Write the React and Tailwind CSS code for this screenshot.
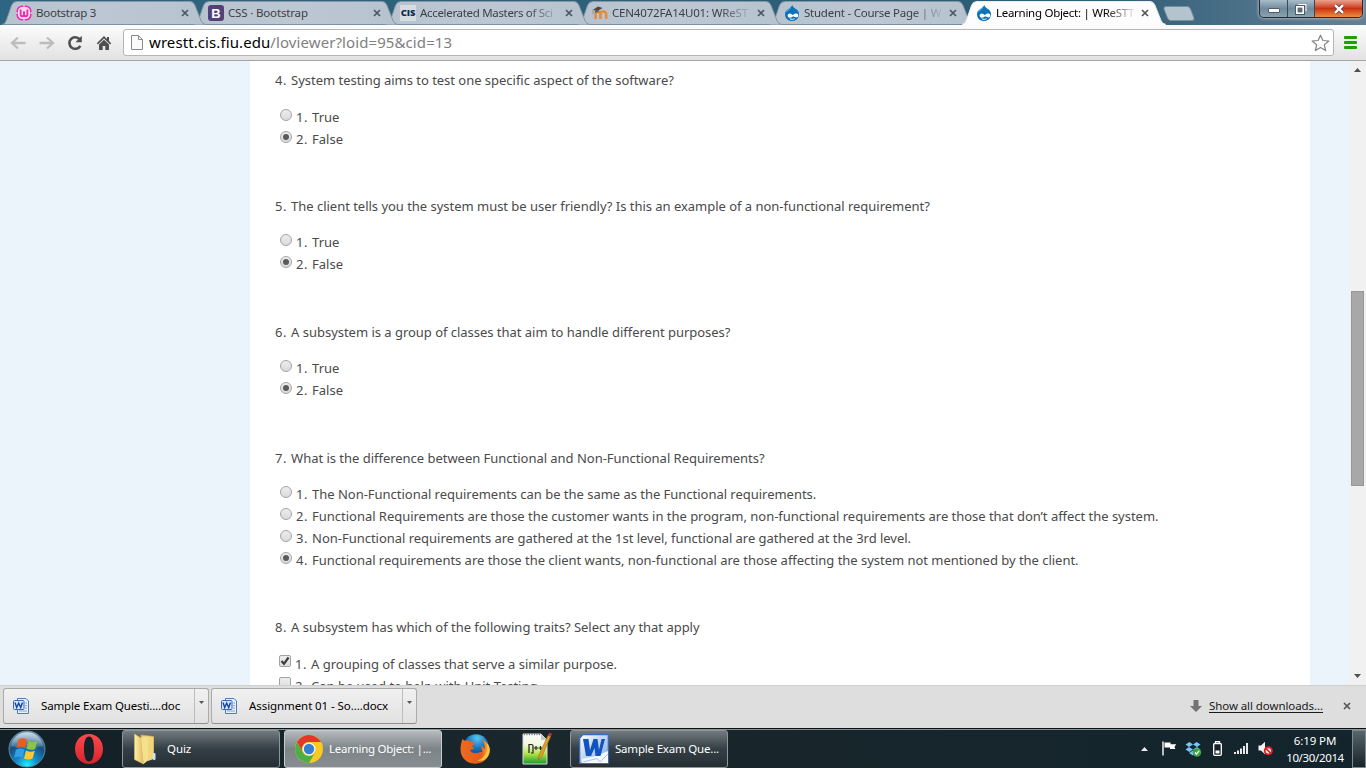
import { clsx } from "clsx";

const QUESTIONS = [
  {
    text: "4. System testing aims to test one specific aspect of the software?",
    options: ["1. True", "2. False"],
    picked: 1,
  },
  {
    text: "5. The client tells you the system must be user friendly? Is this an example of a non-functional requirement?",
    options: ["1. True", "2. False"],
    picked: 1,
  },
  {
    text: "6. A subsystem is a group of classes that aim to handle different purposes?",
    options: ["1. True", "2. False"],
    picked: 1,
  },
  {
    text: "7. What is the difference between Functional and Non-Functional Requirements?",
    options: [
      "1. The Non-Functional requirements can be the same as the Functional requirements.",
      "2. Functional Requirements are those the customer wants in the program, non-functional requirements are those that don’t affect the system.",
      "3. Non-Functional requirements are gathered at the 1st level, functional are gathered at the 3rd level.",
      "4. Functional requirements are those the client wants, non-functional are those affecting the system not mentioned by the client.",
    ],
    picked: 3,
  },
  {
    text: "8. A subsystem has which of the following traits? Select any that apply",
    options: ["1. A grouping of classes that serve a similar purpose.", "2. Can be used to help with Unit Testing."],
    picked: 0,
    multiple: true,
  },
];

function Cross({ className }) {
  return (
    <svg viewBox="0 0 8 8" className={clsx("h-2 w-2 shrink-0", className)}>
      <path d="M1 1L7 7M7 1L1 7" stroke="currentColor" strokeWidth="1.7" fill="none" />
    </svg>
  );
}

/* ---------- tab icons ---------- */

function WampIcon() {
  return (
    <svg viewBox="0 0 16 16" className="h-4 w-4 shrink-0">
      <rect x="1.2" y="1.2" width="13.6" height="13.6" rx="5" fill="#f6dcee" stroke="#f22bb0" strokeWidth="1.6" />
      <path d="M0 8h2M14 8h2M8 0v2M8 14v2" stroke="#c9ccd8" strokeWidth="1.4" />
      <path d="M4.6 4.6v5q0 1.6 1.6 1.6T8 9.6V6.2v3.4q0 1.6 1.7 1.6t1.7-1.6v-5" fill="none" stroke="#f22bb0" strokeWidth="1.9" />
    </svg>
  );
}

function BootstrapIcon() {
  return (
    <span className="flex h-4 w-4 shrink-0 items-center justify-center rounded-[3px] bg-[#53407b] font-['Liberation_Sans'] text-[13px] leading-none font-bold text-white">
      B
    </span>
  );
}

function CisIcon() {
  return (
    <span className="flex h-4 w-4 shrink-0 items-center justify-center bg-[#d5dde2] font-['Open_Sans'] text-[9.5px] leading-none font-extrabold tracking-[-0.2px] text-[#0c2b50]">
      CIS
    </span>
  );
}

function MoodleIcon() {
  return (
    <svg viewBox="0 0 16 16" className="h-4 w-4 shrink-0">
      <path d="M3.6 14V8.6q0-2 1.9-2t2.9 2V14M8.400 14V8.600q0-2 2.600-2t3.200 2V14" fill="none" stroke="#ea8a35" strokeWidth="2.500" />
      <path d="M0.8 5L6 1.600l4.500 1.500-4.800 2.900z" fill="#4b4744" />
      <path d="M3 5.500v2.300l3.600-.6V5z" fill="#66605a" />
      <path d="M1 5.200v4.200" stroke="#85817c" strokeWidth=".7" />
    </svg>
  );
}

function DrupalIcon() {
  return (
    <svg viewBox="0 0 16 16" className="h-4 w-4 shrink-0">
      <path d="M8.2 0C8.8 2 10.2 2.9 12 4c1.800 1.200 3 3 3 5.200C15 13.200 11.800 16 8 16s-7-2.800-7-6.800C1 6.600 2.500 5 4.300 3.900 6.100 2.900 7.600 2 8.200 0z" fill="#0b73ba" />
      <path d="M2.600 5.600C4.200 3.900 6 4 7.400 2.300 7 4.400 3.900 5.200 2.200 7.400z" fill="#5db2e4" />
      <path d="M8.700 10.100c1.400-1.300 2.300-1.700 3.500-1.700 1.500 0 2.300 1.200 2.100 2.600-.3 1.500-2.100 1.800-3.300 1-1-.7-1.700-.8-2.600-.2-1.300.9-3.300 1.300-4.300.2-1.100-1.300-.2-3.200 1.500-3.400 1.300-.1 2.100.8 3.100 1.500z" fill="#fff" />
      <path d="M5.800 13.700c1.500.9 3.400.9 4.800 0" fill="none" stroke="#fff" strokeWidth="1" />
    </svg>
  );
}

/* ---------- tab strip ---------- */

function Tab({ icon, title, tracking, active, className }) {
  return (
    <div className={clsx("relative -mr-[12px] h-6 w-[204px] shrink-0", className)}>
      <svg viewBox="0 0 204 24" className="absolute inset-0 h-6 w-[204px]">
        <defs>
          <linearGradient id="tabIdle" x1="0" x2="1" y1="0" y2="0">
            <stop offset="0" stopColor="#b6c3ce" />
            <stop offset=".5" stopColor="#bdc7d3" />
            <stop offset="1" stopColor="#b6c3ce" />
          </linearGradient>
        </defs>
        <path
          d="M0 23.500Q3 23.500 4.500 19L9.500 4.500Q11 .5 15 .5H188Q191.500 .5 193 4.500L199 19.500Q200.500 23.500 204 23.500"
          fill={active ? "#fdfdfd" : "url(#tabIdle)"}
          stroke={active ? "#e8eef2" : "#8797a3"}
        />
        {active && <path d="M1 23.500H203" stroke="#fcfcfc" strokeWidth="1.500" />}
      </svg>
      <div className="relative flex h-6 items-center pl-[14px]">
        {icon}
        <span
          className={clsx(
            "ml-1 w-[139px] text-[11.5px] whitespace-nowrap",
            title.length > 20 && "[mask-image:linear-gradient(to_right,black_108px,transparent_141px)]",
            tracking,
            active ? "text-black" : "text-[#3c4044]",
          )}
        >
          {title}
        </span>
        <Cross className={clsx("ml-[6px]", active ? "text-[#555]" : "text-[#4d5660]")} />
      </div>
    </div>
  );
}

function WindowButtons() {
  return (
    <div className="ml-auto flex h-[18px] w-[104px] shrink-0 self-start overflow-hidden rounded-b-[5px] border border-t-0 border-[#1d2f3d] shadow-[0_0_3px_1px_rgba(255,210,190,0.55)]">
      <div className="flex w-[28px] items-end justify-center border-r border-[#344b5a] bg-linear-to-b from-[#a9bdc9] via-[#708b9c] via-50% to-[#8aa2af] pb-1">
        <span className="h-[5px] w-[12px] rounded-[1px] border border-[#515b66] bg-white" />
      </div>
      <div className="flex w-[27px] items-center justify-center border-r border-[#344b5a] bg-linear-to-b from-[#a9bdc9] via-[#708b9c] via-50% to-[#8aa2af]">
        <svg viewBox="0 0 12 12" className="h-3 w-3">
          <path d="M4 2h6.500v6.500" fill="none" stroke="#4d5965" strokeWidth="3.200" />
          <path d="M3.500 1.500h7.500v7" fill="none" stroke="#fff" strokeWidth="1.300" />
          <rect x="1.500" y="3.500" width="7" height="7" fill="#566b7b" stroke="#4d5965" strokeWidth="3" />
          <rect x="1.800" y="3.800" width="6.400" height="6.400" fill="#566b7b" stroke="#fff" strokeWidth="1.600" />
        </svg>
      </div>
      <div className="flex flex-1 items-center justify-center bg-linear-to-b from-[#e9a18c] via-[#c93112] via-50% to-[#ef8a3d]">
        <svg viewBox="0 0 12 10" className="h-[10px] w-3">
          <path d="M2 1.200l8 7.600M10 1.200L2 8.800" stroke="#58414a" strokeWidth="4" />
          <path d="M2 1.200l8 7.600M10 1.200L2 8.800" stroke="#fff" strokeWidth="2.400" />
        </svg>
      </div>
    </div>
  );
}

function TitleBar() {
  return (
    <div className="flex h-[25px] items-end bg-linear-to-r from-[#2e6580] via-[#2d5c74] via-80% to-[#628199] pl-[2px]">
      <Tab icon={<WampIcon />} title="Bootstrap 3" tracking="tracking-[-0.25px]" className="z-[5]" />
      <Tab icon={<BootstrapIcon />} title="CSS · Bootstrap" tracking="tracking-[-0.16px]" className="z-[4]" />
      <Tab icon={<CisIcon />} title="Accelerated Masters of Sci" tracking="tracking-[-0.32px]" className="z-[3]" />
      <Tab icon={<MoodleIcon />} title="CEN4072FA14U01: WReST" tracking="tracking-[-0.18px]" className="z-[2]" />
      <Tab icon={<DrupalIcon />} title="Student - Course Page | W" tracking="tracking-[-0.24px]" className="z-[1]" />
      <Tab icon={<DrupalIcon />} title="Learning Object: | WReSTT" tracking="tracking-[-0.28px]" active className="z-[6]" />
      <svg viewBox="0 0 32 15" className="mb-1 ml-[9px] h-[15px] w-8 shrink-0">
        <path d="M3 .5H24Q26.500.500 27.500 3L31 12Q31.500 14.500 29 14.500H8Q5.500 14.500 4.500 12L1 3Q.5.500 3 .500z" fill="#b4c4cf" stroke="#77909e" />
      </svg>
      <WindowButtons />
      <div className="w-[3px] shrink-0" />
    </div>
  );
}

/* ---------- toolbar ---------- */

function Toolbar() {
  return (
    <div className="flex h-9 items-center border-b border-[#a5a5a5] bg-linear-to-b from-[#fcfcfc] to-[#e2e2e2]">
      <svg viewBox="0 0 16 14" className="ml-[10px] h-[14px] w-4">
        <path d="M8 1.500L2 7l6 5.500M2 7h13.500" fill="none" stroke="#bdbdbd" strokeWidth="2.300" />
      </svg>
      <svg viewBox="0 0 16 14" className="ml-[13px] h-[14px] w-4">
        <path d="M8 1.500L14 7l-6 5.500M14 7H.5" fill="none" stroke="#bdbdbd" strokeWidth="2.300" />
      </svg>
      <svg viewBox="0 0 16 16" className="ml-3 h-4 w-4">
        <path d="M12.600 4.200A5.800 5.800 0 1 0 13.300 10.800" fill="none" stroke="#4f4f4f" strokeWidth="2.600" />
        <path d="M14.800.8v6.400H8.400z" fill="#4f4f4f" />
      </svg>
      <svg viewBox="0 0 16 16" className="ml-[13px] h-4 w-4">
        <path d="M8 1L.8 8.300l1.100 1.100L8 3.600l6.100 5.800 1.100-1.100-2.200-2.200V2h-2v2z" fill="#4f4f4f" />
        <path d="M8 4.800l-5 4.700V15h3.700v-4h2.600v4H13V9.500z" fill="#4f4f4f" />
      </svg>
      <div className="ml-[11px] flex h-[27px] w-[1211px] items-center rounded-[3px] border border-[#b5b5b5] bg-white pr-[3px] pl-[7px]">
        <svg viewBox="0 0 12 15" className="h-[15px] w-3">
          <path d="M.5.5H7.500L11.500 4.500V14.500H.5z" fill="#fafafa" stroke="#8a8a8a" />
          <path d="M7.500.5V4.500H11.500" fill="none" stroke="#8a8a8a" />
        </svg>
        <span className="ml-[6px] text-[15px] tracking-[0.09px] text-[#808080]">
          <span className="text-black">wrestt.cis.fiu.edu</span>/loviewer?loid=95&amp;cid=13
        </span>
        <svg viewBox="0 0 19 18" className="ml-auto h-[18px] w-[19px]">
          <path
            d="M9.500 1.300l2.400 5.200 5.900.5-4.500 3.900 1.400 5.700-5.200-3-5.200 3 1.400-5.700L1.200 7l5.900-.5z"
            fill="#fff"
            stroke="#808080"
            strokeWidth="1.200"
            strokeLinejoin="round"
          />
        </svg>
      </div>
      <div className="ml-[10px] flex w-[13px] flex-col gap-[2px]">
        <span className="h-[3px] rounded-[1px] bg-[#1ea000]" />
        <span className="h-[3px] rounded-[1px] bg-[#1ea000]" />
        <span className="h-[3px] rounded-[1px] bg-[#1ea000]" />
      </div>
    </div>
  );
}

/* ---------- quiz ---------- */

function Mark({ multiple, on }) {
  if (multiple) {
    return (
      <span className="-mt-[4.300px] mr-[4px] ml-[4px] flex h-3 w-3 shrink-0 items-center justify-center rounded-[2px] border border-[#a2a2a2] bg-linear-to-b from-[#eee] to-[#dcdcdc]">
        {on && (
          <svg viewBox="0 0 10 10" className="h-[10px] w-[10px] shrink-0">
            <path d="M1.500 5L4 7.800 8.500 1.500" fill="none" stroke="#3c3c3c" strokeWidth="2.200" />
          </svg>
        )}
      </span>
    );
  }
  return (
    <span className="-mt-[4.3px] mr-1 ml-[5px] flex h-3 w-3 shrink-0 items-center justify-center rounded-full border border-[#a4a4a4] bg-linear-to-b from-[#ededed] to-[#dadada]">
      {on && <span className="h-[6px] w-[6px] rounded-full bg-[#5a5a5a]" />}
    </span>
  );
}

function Numbered({ text }) {
  return (
    <>
      <span className="tracking-[0.6px]">{text.slice(0, 3)}</span>
      {text.slice(3)}
    </>
  );
}

function Question({ text, options, picked, multiple }) {
  return (
    <section className="mb-[45.45px]">
      <p className="leading-[22px]">
        <Numbered text={text} />
      </p>
      <div className="mt-[14.3px]">
        {options.map((option, i) => (
          <div key={option} className="flex h-[22px] items-center leading-[22px]">
            <Mark multiple={multiple} on={i === picked} />
            <span>
              <Numbered text={option} />
            </span>
          </div>
        ))}
      </div>
    </section>
  );
}

function Page() {
  return (
    <div className="flex h-[624px] overflow-hidden bg-[#ebf3fb]">
      <main className="ml-[250px] w-[1060px] bg-white pt-[8.4px] pl-[25px] text-[13px] tracking-[-0.025px] whitespace-nowrap text-[#4a4a4a]">
        {QUESTIONS.map((q) => (
          <Question key={q.text} {...q} />
        ))}
      </main>
      <div className="ml-auto flex h-full w-[17px] flex-col items-center bg-[#f1f1f1]">
        <svg viewBox="0 0 7 4" className="mt-[7px] h-1 w-[7px] shrink-0">
          <path d="M0 4L3.500 0 7 4z" fill="#505050" />
        </svg>
        <div className="mt-[219px] h-[195px] w-[13px] shrink-0 border border-[#979797] bg-[#a8a8a8]" />
        <svg viewBox="0 0 7 4" className="mt-auto mb-[7px] h-1 w-[7px] shrink-0">
          <path d="M0 0L3.500 4 7 0z" fill="#505050" />
        </svg>
      </div>
    </div>
  );
}

/* ---------- download shelf ---------- */

function DocIcon() {
  return (
    <svg viewBox="0 0 16 16" className="h-4 w-4 shrink-0">
      <path d="M4.500.5h8.500l2.500 2.500v12.500h-11z" fill="#e9f0fb" stroke="#5877b4" />
      <path d="M12 5h2M12 7.500h2M12 10h2M6 13h8" stroke="#87a3d6" />
      <rect x=".5" y="2.500" width="10.500" height="9" rx="1" fill="#dce8fa" stroke="#3e66b3" />
      <path d="M2 4.500l1.700 5 2-4.500 2 4.500 1.800-5" fill="none" stroke="#1a4ba5" strokeWidth="1.500" />
    </svg>
  );
}

function Download({ name, width, tracking }) {
  return (
    <div className={clsx("flex h-9 rounded-[3px] border border-[#aaa] border-b-[#8f8f8f] bg-linear-to-b from-[#f1f1f1] to-[#e1e1e1]", width)}>
      <div className="flex flex-1 items-center border-r border-[#bcbcbc] pl-[9px]">
        <DocIcon />
        <span className={clsx("ml-3 text-[11.5px] whitespace-nowrap text-black", tracking)}>{name}</span>
      </div>
      <div className="flex w-[13px] justify-center pt-3">
        <svg viewBox="0 0 5 3" className="h-[3px] w-[5px]">
          <path d="M0 0h5L2.500 3z" fill="#555" />
        </svg>
      </div>
    </div>
  );
}

function DownloadShelf() {
  return (
    <div className="flex h-[43px] items-start gap-[2px] border-t border-[#cfcfcf] bg-[#dedede] pt-[2px] pl-[3px]">
      <Download name="Sample Exam Questi....doc" width="w-[206px]" tracking="tracking-[-0.15px]" />
      <Download name="Assignment 01 - So....docx" width="w-[206px]" tracking="tracking-[-0.08px]" />
      <div className="mr-[15px] ml-auto flex h-9 items-center">
        <svg viewBox="0 0 12 12" className="h-3 w-3">
          <path d="M3.500 0h5v6H12L6 12 0 6h3.500z" fill="#737373" />
        </svg>
        <span className="ml-[7px] text-[11.5px] tracking-[-0.08px] text-[#1a1a1a] underline underline-offset-2">Show all downloads...</span>
        <Cross className="ml-5 text-[#555]" />
      </div>
    </div>
  );
}

/* ---------- taskbar ---------- */

function StartOrb() {
  return (
    <svg viewBox="0 0 38 38" className="h-[38px] w-[38px]">
      <defs>
        <radialGradient id="orb" cx=".5" cy=".95" r=".95">
          <stop offset="0" stopColor="#1ff0ff" />
          <stop offset=".3" stopColor="#128fc9" />
          <stop offset=".65" stopColor="#174f83" />
          <stop offset="1" stopColor="#7ba3bd" />
        </radialGradient>
        <linearGradient id="orbGloss" x1="0" x2="0" y1="0" y2="1">
          <stop offset="0" stopColor="#fff" stopOpacity=".65" />
          <stop offset="1" stopColor="#fff" stopOpacity=".1" />
        </linearGradient>
      </defs>
      <circle cx="19" cy="19" r="18" fill="url(#orb)" stroke="#5d879e" />
      <path d="M3 16a16.200 16.200 0 0 1 32 0q-16 5-32 0z" fill="url(#orbGloss)" />
      <path d="M10.500 9.500q4.500-2.500 8.500.2l-2 8q-4-2-8.500.3z" fill="#ee5b22" />
      <path d="M20.500 10.700q4.500 2.400 9 .2l-2.300 8q-4 2-8.700-.3z" fill="#8bc63e" />
      <path d="M8 19.700q4.500-2.200 8.500.1l-2 7.800q-4-2-8.400.2z" fill="#3b9be5" />
      <path d="M18 20.500q4.500 2.300 8.800.3l-2.200 7.800q-4.300 2-8.600-.2z" fill="#ffc92e" />
    </svg>
  );
}

function OperaIcon() {
  return (
    <svg viewBox="0 0 28 30" className="h-[30px] w-7">
      <defs>
        <linearGradient id="opera" x1="0" x2="0" y1="0" y2="1">
          <stop offset="0" stopColor="#fb4a4e" />
          <stop offset="1" stopColor="#d8222b" />
        </linearGradient>
      </defs>
      <path fillRule="evenodd" d="M14 0c8 0 14 6.500 14 15s-6 15-14 15S0 23.500 0 15 6 0 14 0zm0 2.500c-3.700 0-5 5.500-5 12.500s1.300 12.500 5 12.500S19 22 19 15 17.700 2.500 14 2.500z" fill="url(#opera)" />
    </svg>
  );
}

function FolderIcon() {
  return (
    <svg viewBox="0 0 24 32" className="h-8 w-6 shrink-0">
      <defs>
        <linearGradient id="folder" x1="0" x2="1" y1="0" y2="0">
          <stop offset="0" stopColor="#fdf0ae" />
          <stop offset="1" stopColor="#e0bd5c" />
        </linearGradient>
      </defs>
      <path d="M8 2l12.500 1.500V25L9 28z" fill="#ecd27d" stroke="#cda94a" strokeWidth=".7" />
      <path d="M1.500 1l6.500 4 2.500 26-9-4.500z" fill="url(#folder)" stroke="#d4b557" strokeWidth=".7" />
      <path d="M8 5l7-1.500v24l-4.500 3.500z" fill="#f6df8d" />
      <path d="M15 3.500l5.500.500V26L15 28z" fill="#f0d67c" />
      <rect x="20" y="20" width="2.500" height="7" rx="1" fill="#c8e7f5" />
    </svg>
  );
}

function ChromeIcon() {
  return (
    <svg viewBox="0 0 28 28" className="h-7 w-7 shrink-0">
      <circle cx="14" cy="14" r="14" fill="#f7ca24" />
      <path d="M1.900 7A14 14 0 0 1 26.100 7H14a7 7 0 0 0-6.100 10.500z" fill="#e2372d" />
      <path d="M1.900 7A14 14 0 0 0 14 28l6.100-10.500a7 7 0 0 1-12.200 0z" fill="#4caf45" />
      <circle cx="14" cy="14" r="6.500" fill="#f5f5f5" />
      <circle cx="14" cy="14" r="5.200" fill="#357fd0" />
    </svg>
  );
}

function FirefoxIcon() {
  return (
    <svg viewBox="0 0 30 30" className="h-[30px] w-[30px]">
      <defs>
        <radialGradient id="globe" cx=".55" cy=".15" r=".8">
          <stop offset="0" stopColor="#57c7f2" />
          <stop offset=".5" stopColor="#1673bd" />
          <stop offset="1" stopColor="#0b3775" />
        </radialGradient>
        <linearGradient id="fox" x1="0" x2="1" y1="0" y2="0">
          <stop offset="0" stopColor="#ee6b20" />
          <stop offset=".7" stopColor="#e65a1b" />
          <stop offset="1" stopColor="#fbb83c" />
        </linearGradient>
      </defs>
      <circle cx="16" cy="13" r="12.800" fill="url(#globe)" />
      <path d="M2.500 4.500c.5 1.500 1.500 2 3 2.200C8 5.500 10 6.500 11.500 8c1.500.2 3 .2 3.500 1-.5 1.500-2.500 2-3 3.500 1.500.5 2 1.500 1.500 2.500-1 1-2.500.5-3.500.5 1 3 4 4 7 3.500 2.500-.5 4-1.500 5.500-.5-.5-3-2-5-1-7 1.500 1 2.500 2.500 3 4 .8-4-.5-8-3-10.500C26 7 29.700 11 29.700 16c0 8-6.500 13.700-14.500 13.700S.5 24 .5 15.500C.5 11 1.500 8 2.500 4.500z" fill="url(#fox)" />
      <path d="M26.500 9c2.500 6-.500 15-9 17.500 7 1.500 12-4 12.200-10.500 0-3-1.200-5.500-3.200-7z" fill="#fcc43c" />
    </svg>
  );
}

function NotepadIcon() {
  return (
    <svg viewBox="0 0 30 33" className="h-[33px] w-[30px]">
      <defs>
        <linearGradient id="sheet" x1="0" x2="0" y1="0" y2="1">
          <stop offset="0" stopColor="#fbfbfb" />
          <stop offset=".35" stopColor="#f1f8df" />
          <stop offset=".65" stopColor="#b5e54b" />
          <stop offset="1" stopColor="#149a2a" />
        </linearGradient>
      </defs>
      <path d="M1 2h18l6 6v24H1z" fill="url(#sheet)" stroke="#d8d8d8" />
      <path d="M2 2.500h17" stroke="#777" strokeWidth="1.500" strokeDasharray="1 1.500" />
      <path d="M19 2v6h6z" fill="#c6c6c6" />
      <path d="M7 21V12.500h2.500q1.500 0 1.500 1.500v7H9" fill="none" stroke="#222" strokeWidth="1.200" />
      <path d="M12 16h4M14 14v4M16.500 16h4M18.500 14v4" stroke="#222" strokeWidth="1.100" />
      <path d="M26.500 2.500l2.500 1.200L20 24l-3.500 4 .5-5z" fill="#e3a026" stroke="#94691e" strokeWidth=".6" />
      <path d="M26 3.500L27.500.5 30 2l-1.500 3z" fill="#b63737" />
    </svg>
  );
}

function WordIcon() {
  return (
    <svg viewBox="0 0 30 30" className="h-[30px] w-[30px] shrink-0">
      <defs>
        <linearGradient id="word" x1="0" x2="1" y1="0" y2="1">
          <stop offset="0" stopColor="#fff" />
          <stop offset="1" stopColor="#7ba4e4" />
        </linearGradient>
      </defs>
      <path d="M4 .7H29.300V29.300H.7V4z" fill="url(#word)" stroke="#356bbd" strokeWidth="1.200" />
      <path d="M3 25l14-3 12-5v12H3z" fill="#f5f9ff" />
      <path d="M4 28l14-3.500 3 3.500 8-8" fill="none" stroke="#aac4ec" />
      <path d="M4 5h5.500l1.500 11L14.500 5h4l1.500 11L22.500 5H26L21.500 22H16.500l-1-8-3.500 8H7z" fill="#1254bf" />
    </svg>
  );
}

function TaskButton({ icon, label, bright, className }) {
  return (
    <div
      className={clsx(
        "flex h-[38px] w-[158px] items-center overflow-hidden rounded-[3px] border text-[11.5px] whitespace-nowrap text-white",
        bright
          ? "border-[#c7cdcf] bg-linear-to-b from-[#b6babc] via-[#7c8488] via-50% to-[#878e91]"
          : "border-[#8c9699] bg-linear-to-b from-[#727b80] via-[#343f45] via-50% to-[#252e34]",
        className,
      )}
    >
      {icon}
      {label}
    </div>
  );
}

function Tray() {
  return (
    <div className="ml-auto flex h-full items-center">
      <svg viewBox="0 0 7 4" className="h-1 w-[7px]">
        <path d="M0 4L3.500 0 7 4z" fill="#e8ecee" />
      </svg>
      <svg viewBox="0 0 15 15" className="ml-[14px] h-[15px] w-[15px]">
        <path d="M1 .5V14.500" stroke="#fff" strokeWidth="1.400" />
        <path d="M2.500 1.500h6v1.800h5.800l-1.800 2.500.8 2.200H8V6.500H2.500z" fill="#fff" />
      </svg>
      <svg viewBox="0 0 17 16" className="ml-2 h-4 w-[17px]">
        <path d="M4.500 1L8 3.500 4 6 .5 3.500zM11.500 1L8 3.500 12 6l3.500-2.500zM4 6l4 2.500L4.500 11 .5 8.500zM12 6L8 8.500l3.500 2.500 4-2.500zM4 12l4-2.500 4 2.500-4 2.500z" fill="#7cc3f5" />
        <circle cx="12" cy="11.500" r="4.200" fill="#36a83c" />
        <path d="M10 11.500l1.500 1.700 2.700-3.500" fill="none" stroke="#fff" strokeWidth="1.300" />
      </svg>
      <svg viewBox="0 0 9 15" className="ml-[11px] h-[15px] w-[9px]">
        <path d="M2.500 2.500V.7h4v1.800" fill="none" stroke="#fff" strokeWidth="1.200" />
        <rect x=".7" y="2.500" width="7.600" height="11.800" rx="1" fill="#172127" stroke="#fff" strokeWidth="1.300" />
        <path d="M2.500 9.500h4v3h-4z" fill="#fff" />
      </svg>
      <svg viewBox="0 0 14 11" className="ml-3 h-[11px] w-[14px]">
        <path d="M1 9v2M4 7.500V11M7 5.500V11M10 3V11M13 0V11" stroke="#fff" strokeWidth="1.800" />
      </svg>
      <svg viewBox="0 0 15 15" className="ml-[10px] h-[15px] w-[15px]">
        <path d="M.5 4.500H3L7 .8v12.400L3 9.500H.5z" fill="#f5f5f5" />
        <circle cx="10.300" cy="9.800" r="3.600" fill="#fff" stroke="#df2026" strokeWidth="1.900" />
        <path d="M7.800 7.300l5 5" stroke="#df2026" strokeWidth="1.700" />
      </svg>
      <div className="ml-[12px] flex w-[60px] flex-col items-center text-[11.5px] leading-[17px] whitespace-nowrap text-white">
        <span className="tracking-[-0.1px]">6:19 PM</span>
        <span className="tracking-[-0.35px]">10/30/2014</span>
      </div>
      <div className="ml-[7px] h-[38px] w-[14px] border border-[#7d898e] bg-linear-to-b from-[#59666c] to-[#19242a]" />
    </div>
  );
}

function Taskbar() {
  return (
    <div className="flex h-10 items-center border-t border-[#0b1115] bg-linear-to-r from-[#121f26] via-[#1a272c] via-40% to-[#13242c] shadow-[inset_0_1px_0_#869194]">
      <div className="ml-2">
        <StartOrb />
      </div>
      <div className="ml-[29px]">
        <OperaIcon />
      </div>
      <TaskButton className="ml-[19px] pl-[10px] tracking-[-0.1px]" icon={<FolderIcon />} label={<span className="ml-[10px]">Quiz</span>} />
      <TaskButton className="ml-1 pl-[10px] tracking-[-0.27px]" bright icon={<ChromeIcon />} label={<span className="ml-[6px]">Learning Object: |...</span>} />
      <div className="ml-[18px]">
        <FirefoxIcon />
      </div>
      <div className="ml-8">
        <NotepadIcon />
      </div>
      <TaskButton className="ml-[18px] pl-2 tracking-[-0.2px]" icon={<WordIcon />} label={<span className="ml-[6px]">Sample Exam Que...</span>} />
      <Tray />
    </div>
  );
}

export default function App() {
  return (
    <div className="flex h-[768px] w-[1366px] flex-col overflow-hidden bg-white font-['Noto_Sans','Open_Sans',sans-serif]">
      <TitleBar />
      <Toolbar />
      <Page />
      <DownloadShelf />
      <Taskbar />
    </div>
  );
}
